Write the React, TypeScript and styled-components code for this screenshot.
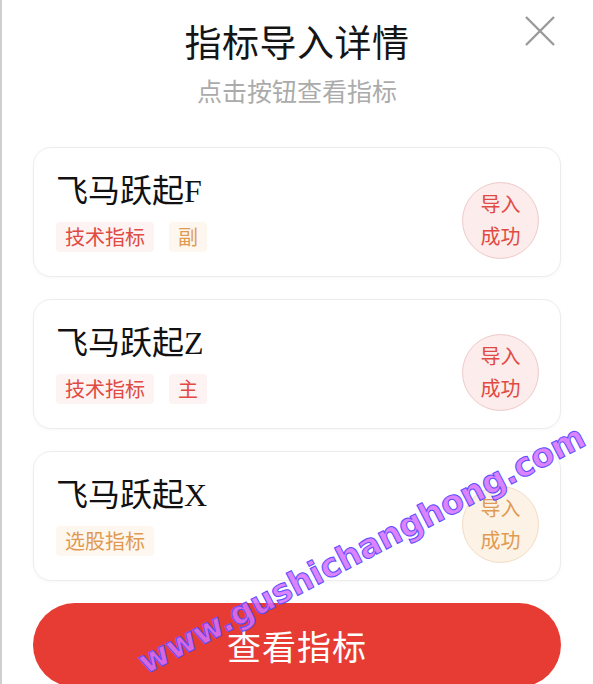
import * as React from "react";
import styled, { createGlobalStyle } from "styled-components";

type Tone = "red" | "orange";

type Item = {
    name: string;
    tags: { label: string; tone: Tone }[];
    tone: Tone;
};

const items: Item[] = [
    {
        name: "飞马跃起F",
        tags: [
            { label: "技术指标", tone: "red" },
            { label: "副", tone: "orange" },
        ],
        tone: "red",
    },
    {
        name: "飞马跃起Z",
        tags: [
            { label: "技术指标", tone: "red" },
            { label: "主", tone: "red" },
        ],
        tone: "red",
    },
    {
        name: "飞马跃起X",
        tags: [{ label: "选股指标", tone: "orange" }],
        tone: "orange",
    },
];

const palette = {
    red: { text: "#e04a42", tagBg: "#fdf3f3", badgeBg: "#fcecec", badgeBorder: "#efc9c9" },
    orange: { text: "#e19a52", tagBg: "#fdf7f0", badgeBg: "#fcf2e6", badgeBorder: "#f3dcc3" },
};

const App: React.FC = () => {
    return (
        <>
            <GlobalStyle />
            <Page>
                <Header>
                    <Title>指标导入详情</Title>
                    <Subtitle>点击按钮查看指标</Subtitle>
                    <CloseButton aria-label="关闭">
                        <svg width="32" height="32" viewBox="0 0 32 32">
                            <path d="M2 2 L30 30 M30 2 L2 30" stroke="#9a9a9a" strokeWidth="2.4" fill="none" />
                        </svg>
                    </CloseButton>
                </Header>

                <List>
                    {items.map((item) => (
                        <Card key={item.name}>
                            <Info>
                                <Name>{item.name}</Name>
                                <Tags>
                                    {item.tags.map((t) => (
                                        <Tag key={t.label} $tone={t.tone}>
                                            {t.label}
                                        </Tag>
                                    ))}
                                </Tags>
                            </Info>
                            <Badge $tone={item.tone}>
                                <span>导入</span>
                                <span>成功</span>
                            </Badge>
                        </Card>
                    ))}
                </List>

                <ViewButton>查看指标</ViewButton>

                <Watermark>www.gushichanghong.com</Watermark>
            </Page>
        </>
    );
};

const GlobalStyle = createGlobalStyle`
    html, body {
        margin: 0;
        padding: 0;
        background: #ffffff;
        overflow: hidden;
    }
    body {
        font-family: "Noto Sans CJK SC", "Noto Sans", sans-serif;
    }
`;

const Page = styled("div")`
    position: relative;
    width: 593px;
    height: 684px;
    box-sizing: border-box;
    border-left: 2px solid #cfcfcf;
    padding: 0 32px 0 31px;
    overflow: hidden;
    background: #ffffff;
`;

const Header = styled("div")`
    position: relative;
    display: flex;
    flex-direction: column;
    align-items: center;
    padding-top: 19px;
    margin-bottom: 42px;
`;

const Title = styled("div")`
    font-size: 37px;
    line-height: 44px;
    color: #151515;
    letter-spacing: 0.5px;
`;

const Subtitle = styled("div")`
    margin-top: 12px;
    font-size: 25px;
    line-height: 30px;
    color: #ababab;
`;

const CloseButton = styled("div")`
    position: absolute;
    top: 15px;
    right: 5px;
    width: 32px;
    height: 32px;
    display: flex;
`;

const List = styled("div")`
    display: flex;
    flex-direction: column;
    gap: 22px;
`;

const Card = styled("div")`
    display: flex;
    align-items: center;
    justify-content: space-between;
    box-sizing: border-box;
    height: 130px;
    padding: 0 21px 0 22px;
    border: 1px solid #ececec;
    border-radius: 18px;
    box-shadow: 0 1px 4px rgba(0, 0, 0, 0.03);
    background: #ffffff;
`;

const Info = styled("div")`
    display: flex;
    flex-direction: column;
    gap: 13px;
`;

const Name = styled("div")`
    font-family: "Liberation Serif", "Noto Sans CJK SC", serif;
    font-size: 32px;
    line-height: 36px;
    color: #111111;
`;

const Tags = styled("div")`
    display: flex;
    gap: 15px;
`;

const Tag = styled("span")<{ $tone: Tone }>`
    display: inline-flex;
    align-items: center;
    height: 30px;
    padding: 0 9px;
    font-size: 20px;
    color: ${(p) => palette[p.$tone].text};
    background: ${(p) => palette[p.$tone].tagBg};
    border-radius: 4px;
`;

const Badge = styled("div")<{ $tone: Tone }>`
    display: flex;
    flex-direction: column;
    align-items: center;
    justify-content: center;
    width: 77px;
    height: 77px;
    margin-top: 16px;
    border-radius: 50%;
    box-sizing: border-box;
    border: 1px solid ${(p) => palette[p.$tone].badgeBorder};
    background: ${(p) => palette[p.$tone].badgeBg};
    color: ${(p) => palette[p.$tone].text};
    font-size: 20px;
    line-height: 32px;
`;

const ViewButton = styled("div")`
    display: flex;
    align-items: center;
    justify-content: center;
    margin-top: 22px;
    height: 84px;
    border-radius: 42px;
    background: #e63c33;
    color: #ffffff;
    font-size: 34px;
    letter-spacing: 1px;
`;

const Watermark = styled("div")`
    position: absolute;
    left: 146px;
    top: 646px;
    transform-origin: 0 100%;
    transform: rotate(-27.5deg);
    font-family: "DejaVu Sans", sans-serif;
    font-weight: bold;
    font-size: 33px;
    line-height: 33px;
    letter-spacing: 0px;
    white-space: nowrap;
    color: rgba(214, 110, 255, 0.85);
    -webkit-text-stroke: 1px #5a4cff;
    pointer-events: none;
`;

export default App;
